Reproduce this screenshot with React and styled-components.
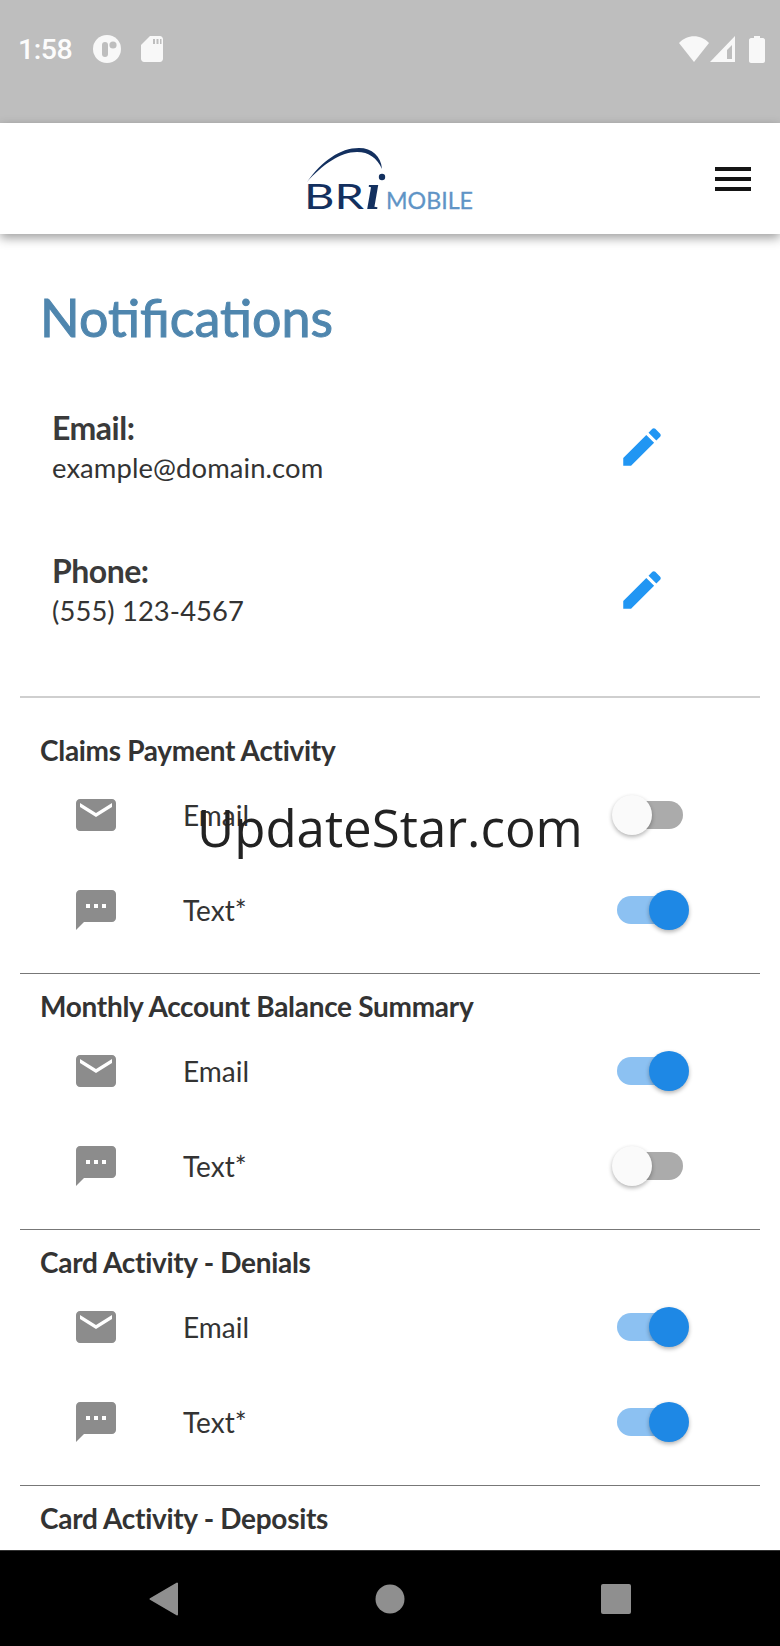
import React from 'react';
import styled, { createGlobalStyle } from 'styled-components';

const GlobalStyle = createGlobalStyle`
	html, body {
		margin: 0;
		padding: 0;
		background: #fff;
	}
	* {
		box-sizing: border-box;
	}
`;

const Page = styled.div`
	position: relative;
	width: 780px;
	height: 1646px;
	display: flex;
	flex-direction: column;
	overflow: hidden;
	font-family: Lato, "Liberation Sans", sans-serif;
	color: #333;
`;

const StatusBar = styled.div`
	height: 123px;
	flex: none;
	background: #bebebe;
	display: flex;
	justify-content: space-between;
	align-items: flex-start;
	padding: 33px 15px 0 18px;
	color: #fcfcfc;
`;

const StatusGroup = styled.div`
	display: flex;
	align-items: center;
	gap: ${(p) => p.$gap || 0}px;
	height: 32px;
`;

const Clock = styled.span`
	font-family: Roboto, sans-serif;
	font-size: 28.5px;
	font-weight: 500;
	letter-spacing: -0.5px;
	margin-right: 21px;
`;

const Header = styled.header`
	position: relative;
	z-index: 2;
	height: 111px;
	flex: none;
	background: #fff;
	box-shadow: 0 4px 10px rgba(0, 0, 0, 0.38);
	display: flex;
	align-items: flex-start;
	justify-content: space-between;
	padding: 22px 29px 0 303px;
`;

const Hamburger = styled.div`
	width: 36px;
	height: 24px;
	margin-top: 22px;
	display: flex;
	flex-direction: column;
	justify-content: space-between;
	& > span {
		display: block;
		height: 4px;
		background: #151515;
	}
`;

const Main = styled.main`
	flex: 1;
	min-height: 0;
	overflow: hidden;
`;

const Title = styled.h1`
	margin: 0;
	padding: 46px 0 0 40px;
	font-size: 52px;
	line-height: 74px;
	font-weight: 400;
	color: #4f86ae;
	-webkit-text-stroke: 1px #4f86ae;
`;

const Contacts = styled.div`
	padding: 27px 0 29px 52px;
`;

const Contact = styled.div`
	height: 143px;
	padding-right: 113px;
	display: flex;
	justify-content: space-between;
	align-items: flex-start;
`;

const ContactText = styled.div`
	padding-top: 27px;
`;

const ContactLabel = styled.div`
	font-size: 32px;
	line-height: 40px;
	font-weight: 700;
	letter-spacing: -0.5px;
	color: #3a3a3a;
`;

const ContactValue = styled.div`
	font-size: 27.4px;
	line-height: 40px;
	letter-spacing: 0.1px;
	color: #333;
`;

const EditButton = styled.div`
	padding-top: 41px;
	color: #2196f3;
	display: flex;
`;

const Section = styled.section`
	margin: 0 20px;
	border-top: ${(p) => (p.$first ? '2px solid #cfcfcf' : '1px solid #777')};
	padding: ${(p) => (p.$first ? '20px' : '0')} 0 16px;
`;

const SectionTitle = styled.h2`
	margin: 0;
	padding: 15px 0 0 20px;
	height: 49px;
	font-size: 28px;
	line-height: 34px;
	font-weight: 700;
	letter-spacing: -0.3px;
	color: #333;
`;

const Row = styled.div`
	height: 95px;
	display: grid;
	grid-template-columns: 111px 1fr auto;
	align-items: center;
	padding: 0 77px 0 52px;
	font-size: 28px;
	color: #333;
`;

const RowIcon = styled.div`
	display: flex;
	color: #8c8c8c;
`;

const Track = styled.div`
	position: relative;
	width: 66px;
	height: 28px;
	border-radius: 14px;
	background: ${(p) => (p.$on ? '#8cc1f2' : '#ababab')};
`;

const Knob = styled.div`
	position: absolute;
	top: -6px;
	left: ${(p) => (p.$on ? '32px' : '-5px')};
	width: 40px;
	height: 40px;
	border-radius: 50%;
	background: ${(p) => (p.$on ? '#1e88e5' : '#fafafa')};
	box-shadow: 0 2px 4px rgba(0, 0, 0, 0.3);
`;

const NavBar = styled.nav`
	height: 96px;
	flex: none;
	background: #000;
	border-top: 1px solid #333;
	display: grid;
	grid-template-columns: repeat(3, 226px);
	justify-content: center;
	align-items: center;
	justify-items: center;
	color: #8f8f8f;
`;

const Watermark = styled.div`
	position: absolute;
	top: 791px;
	left: 197px;
	font-family: "Open Sans", sans-serif;
	font-size: 51px;
	line-height: 72px;
	color: #222;
	white-space: nowrap;
`;

const Logo = () => (
	<svg width="172" height="72" viewBox="0 0 172 72">
		<path d="M4 37C19 16 37 3 56 3C69 3 78 11 79 24C74 13 66 7 54 7C37 7 19 20 4 37Z" fill="#13305f" />
		<circle cx="79" cy="32" r="3.2" fill="#13305f" />
		<text x="1" y="64" fontFamily="Lato, sans-serif" fontSize="34" fill="#13305f" textLength="60" lengthAdjust="spacingAndGlyphs">BR</text>
		<text x="63" y="64" fontFamily="'Liberation Serif', serif" fontStyle="italic" fontWeight="700" fontSize="52" fill="#13305f">ı</text>
		<text x="83" y="64" fontFamily="Lato, sans-serif" fontSize="23" fill="#5f94c6" stroke="#5f94c6" strokeWidth="0.3" textLength="87" lengthAdjust="spacingAndGlyphs">MOBILE</text>
	</svg>
);

const EditIcon = () => (
	<svg width="50" height="50" viewBox="0 0 24 24" fill="currentColor">
		<path d="M3 17.25V21h3.75L17.81 9.94l-3.75-3.75L3 17.25zM20.71 7.04c.39-.39.39-1.02 0-1.41l-2.34-2.34c-.39-.39-1.02-.39-1.41 0l-1.83 1.83 3.75 3.75 1.83-1.83z" />
	</svg>
);

const MailIcon = () => (
	<svg width="48" height="48" viewBox="0 0 24 24" fill="currentColor">
		<path d="M20 4H4c-1.1 0-2 .9-2 2v12c0 1.1.9 2 2 2h16c1.1 0 2-.9 2-2V6c0-1.1-.9-2-2-2zm0 4-8 5-8-5V6l8 5 8-5v2z" />
	</svg>
);

const SmsIcon = () => (
	<svg width="48" height="48" viewBox="0 0 24 24" fill="currentColor">
		<path d="M20 2H4c-1.1 0-1.99.9-1.99 2L2 22l4-4h14c1.1 0 2-.9 2-2V4c0-1.1-.9-2-2-2zM9 11H7V9h2v2zm4 0h-2V9h2v2zm4 0h-2V9h2v2z" />
	</svg>
);

const Toggle = ({ on }) => (
	<Track $on={on}>
		<Knob $on={on} />
	</Track>
);

// the last section runs under the nav bar, only its title is on screen
const sections = [
	{ title: 'Claims Payment Activity', email: false, text: true },
	{ title: 'Monthly Account Balance Summary', email: true, text: false },
	{ title: 'Card Activity - Denials', email: true, text: true },
	{ title: 'Card Activity - Deposits' },
];

const App = () => (
	<Page>
		<GlobalStyle />
		<StatusBar>
			<StatusGroup>
				<Clock>1:58</Clock>
				<svg width="28" height="28" viewBox="0 0 28 28">
					<circle cx="14" cy="14" r="14" fill="#f8f8f8" />
					<rect x="9" y="7" width="6" height="15" rx="3" fill="#bebebe" />
					<circle cx="20" cy="10" r="3.6" fill="#bebebe" />
				</svg>
				<svg width="22" height="26" viewBox="0 0 22 26" style={{ marginLeft: 20 }}>
					<path d="M9 0H19C20.5 0 22 1.5 22 3V23C22 24.5 20.5 26 19 26H3C1.5 26 0 24.5 0 23V9Z" fill="#f8f8f8" />
					<path d="M12 3h2v5h-2zM15.5 3h2v5h-2zM19 3h1.5v5H19z" fill="#bebebe" />
				</svg>
			</StatusGroup>
			<StatusGroup $gap={1}>
				<svg width="30" height="26" viewBox="0 0 30 26">
					<path d="M0 7C8 -2 22 -2 30 7L15 26Z" fill="#f8f8f8" />
				</svg>
				<svg width="26" height="26" viewBox="0 0 26 26">
					<path d="M25 0V26H0ZM22 9 17 14V23H22Z" fill="#f8f8f8" fillRule="evenodd" />
				</svg>
				<svg width="16" height="27" viewBox="0 0 16 27" style={{ marginLeft: 12 }}>
					<path d="M5 0H11V2H14C15 2 16 3 16 4V25C16 26 15 27 14 27H2C1 27 0 26 0 25V4C0 3 1 2 2 2H5Z" fill="#f8f8f8" />
				</svg>
			</StatusGroup>
		</StatusBar>
		<Header>
			<Logo />
			<Hamburger>
				<span />
				<span />
				<span />
			</Hamburger>
		</Header>
		<Main>
			<Title>Notifications</Title>
			<Contacts>
				<Contact>
					<ContactText>
						<ContactLabel>Email:</ContactLabel>
						<ContactValue>example@domain.com</ContactValue>
					</ContactText>
					<EditButton>
						<EditIcon />
					</EditButton>
				</Contact>
				<Contact>
					<ContactText>
						<ContactLabel>Phone:</ContactLabel>
						<ContactValue>(555) 123-4567</ContactValue>
					</ContactText>
					<EditButton>
						<EditIcon />
					</EditButton>
				</Contact>
			</Contacts>
			{sections.map((section, i) => (
				<Section key={section.title} $first={i === 0}>
					<SectionTitle>{section.title}</SectionTitle>
					{section.email !== undefined && (
						<Row>
							<RowIcon>
								<MailIcon />
							</RowIcon>
							<span>Email</span>
							<Toggle on={section.email} />
						</Row>
					)}
					{section.text !== undefined && (
						<Row>
							<RowIcon>
								<SmsIcon />
							</RowIcon>
							<span>Text*</span>
							<Toggle on={section.text} />
						</Row>
					)}
				</Section>
			))}
		</Main>
		<NavBar>
			<svg width="30" height="34" viewBox="0 0 30 34">
				<path d="M28 1.5V32.5L1.5 17Z" fill="currentColor" stroke="currentColor" strokeWidth="2" strokeLinejoin="round" />
			</svg>
			<svg width="30" height="30" viewBox="0 0 30 30">
				<circle cx="15" cy="15" r="14.5" fill="currentColor" />
			</svg>
			<svg width="30" height="30" viewBox="0 0 30 30">
				<rect width="30" height="30" rx="2" fill="currentColor" />
			</svg>
		</NavBar>
		<Watermark>UpdateStar.com</Watermark>
	</Page>
);

export default App;
